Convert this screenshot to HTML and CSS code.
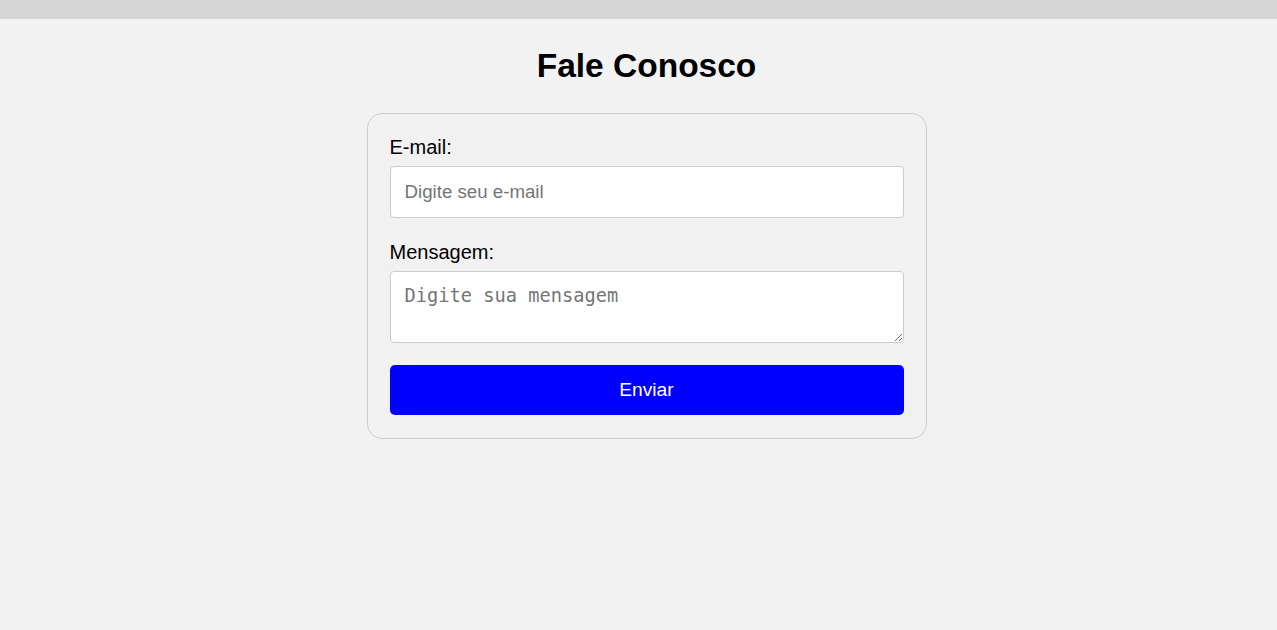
FILE: index.html
```html
<!DOCTYPE html>
<html lang="pt-BR">
<head>
<meta charset="utf-8">
<title>Fale Conosco</title>
<link rel="stylesheet" href="styles.css">
</head>
<body>
<div class="topbar"></div>
<main class="page">
  <h1 class="title">Fale Conosco</h1>
  <form class="card">
    <label class="label" for="email">E-mail:</label>
    <input class="field" id="email" type="email" placeholder="Digite seu e-mail">
    <label class="label" for="msg">Mensagem:</label>
    <textarea class="field area" id="msg" placeholder="Digite sua mensagem"></textarea>
    <button class="submit" type="button">Enviar</button>
  </form>
</main>
</body>
</html>
```
FILE: styles.css
```css
html, body {
  margin: 0;
  padding: 0;
}
body {
  background: #f2f2f2;
  font-family: "Liberation Sans", Arial, sans-serif;
  color: #000;
}
.topbar {
  height: 19px;
  background: #d6d6d6;
}
.page {
  display: flex;
  flex-direction: column;
  align-items: center;
  padding-left: 16px;
}
.title {
  font-size: 33.5px;
  font-weight: bold;
  margin: 28px 0 28px;
  line-height: 38px;
}
.card {
  box-sizing: border-box;
  width: 560px;
  padding: 22px 22px 23px;
  border: 1px solid #cccccc;
  border-radius: 15px;
  background: #f1f1f1;
  display: flex;
  flex-direction: column;
}
.label {
  display: block;
  font-size: 20px;
  line-height: 23px;
  margin-bottom: 7px;
}
.field {
  box-sizing: border-box;
  width: 100%;
  height: 52px;
  padding: 14px;
  border: 1px solid #cccccc;
  border-radius: 4px;
  background: #fff;
  font-family: "Liberation Sans", Arial, sans-serif;
  font-size: 18.7px;
  margin: 0 0 23px;
}
.field::placeholder {
  color: #757575;
}
.area {
  height: 72px;
  font-family: "DejaVu Sans Mono", monospace;
  font-size: 18.7px;
  line-height: 22px;
  padding: 13px 14px;
  margin-bottom: 22px;
  resize: vertical;
}
.submit {
  height: 50px;
  width: 100%;
  border: none;
  border-radius: 5px;
  background: #0000ff;
  color: #fff;
  font-family: "Liberation Sans", Arial, sans-serif;
  font-size: 19.2px;
  cursor: pointer;
}
```
